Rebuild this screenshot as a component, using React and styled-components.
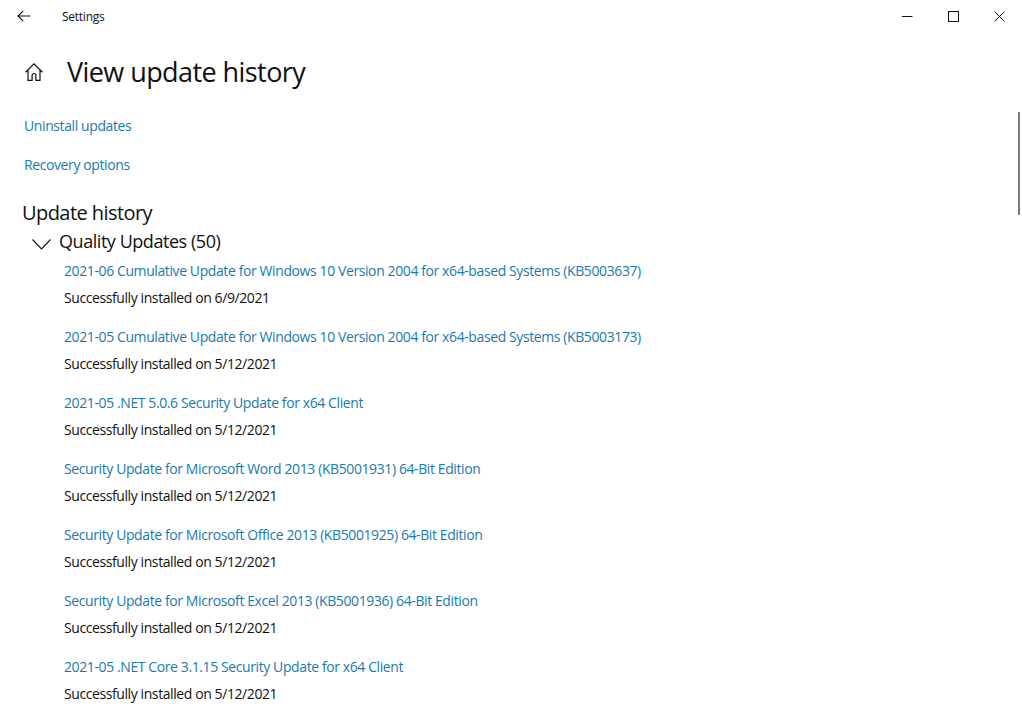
import React from "react";
import styled, { createGlobalStyle } from "styled-components";

const Global = createGlobalStyle`
  html, body { margin: 0; padding: 0; background: #fff; overflow: hidden; }
  body { font-family: "Open Sans", "Noto Sans", sans-serif; color: #000; }
`;
const Page = styled.div`
  width: 1022px; height: 726px; position: relative; overflow: hidden; background: #fff;
`;
const TitleBar = styled.header`
  height: 32px; display: flex; align-items: center;
`;
const BackButton = styled.button`
  width: 48px; height: 32px; padding: 0; border: 0; background: none;
  display: flex; align-items: center; justify-content: center;
`;
const AppName = styled.span`
  margin-left: 14px; font-size: 12px; color: #111; letter-spacing: -0.25px; flex: 1;
`;
const WindowControls = styled.div`
  display: flex; width: 138px; height: 32px;
`;
const WindowButton = styled.button`
  width: 46px; height: 32px; padding: 0; border: 0; background: none;
  display: flex; align-items: center; justify-content: center;
`;
const Content = styled.main`
  padding: 0 0 0 24px;
`;
const Heading = styled.div`
  display: flex; align-items: center; height: 48px; margin-top: 16px;
`;
const HomeIcon = styled.svg`
  width: 18px; height: 18px; margin: 0 24px 0 1px; flex: none;
`;
const Title = styled.h1`
  margin: 0; font-size: 27px; font-weight: 400; color: #111; letter-spacing: -0.57px; line-height: 48px;
`;
const NavLinks = styled.nav`
  display: flex; flex-direction: column; gap: 19px; margin-top: 20px;
`;
const NavLink = styled.a`
  font-size: 14px; line-height: 20px; color: #1a7aad; letter-spacing: -0.4px;
`;
const SectionTitle = styled.h2`
  margin: 24px 0 0 -2px; font-size: 20px; font-weight: 400; line-height: 28px; color: #111; letter-spacing: -0.56px;
`;
const GroupHeader = styled.div`
  display: flex; align-items: center; height: 30px; margin: -1px 0 0 8px;
`;
const Chevron = styled.svg`
  width: 19px; height: 11px; margin-top: 6px; margin-right: 8px; flex: none;
`;
const GroupTitle = styled.span`
  font-size: 18px; color: #111; letter-spacing: -0.45px;
`;
const UpdateList = styled.ul`
  list-style: none; margin: 5px 0 0 40px; padding: 0;
`;
const UpdateRow = styled.li`
  height: 66px; display: flex; flex-direction: column; gap: 7px;
`;
const UpdateLink = styled.a`
  font-size: 14px; line-height: 20px; color: #1a7aad; letter-spacing: -0.4px; white-space: nowrap;
`;
const UpdateStatus = styled.span`
  font-size: 14px; line-height: 20px; color: #111; letter-spacing: -0.41px; white-space: nowrap;
`;
const ScrollThumb = styled.div`
  position: absolute; top: 112px; right: 2px; width: 2px; height: 103px; background: #7a7a7a;
`;

const updates = [
  ["2021-06 Cumulative Update for Windows 10 Version 2004 for x64-based Systems (KB5003637)", "6/9/2021"],
  ["2021-05 Cumulative Update for Windows 10 Version 2004 for x64-based Systems (KB5003173)", "5/12/2021"],
  ["2021-05 .NET 5.0.6 Security Update for x64 Client", "5/12/2021"],
  ["Security Update for Microsoft Word 2013 (KB5001931) 64-Bit Edition", "5/12/2021"],
  ["Security Update for Microsoft Office 2013 (KB5001925) 64-Bit Edition", "5/12/2021"],
  ["Security Update for Microsoft Excel 2013 (KB5001936) 64-Bit Edition", "5/12/2021"],
  ["2021-05 .NET Core 3.1.15 Security Update for x64 Client", "5/12/2021"],
];

export default function App() {
  return (
    <Page>
      <Global />
      <TitleBar>
        <BackButton aria-label="Back">
          <svg width="14" height="12" viewBox="0 0 14 12" fill="none" stroke="#111" strokeWidth="1.1">
            <path d="M13.5 6H1M6.2 .8 1 6l5.2 5.2" />
          </svg>
        </BackButton>
        <AppName>Settings</AppName>
        <WindowControls>
          <WindowButton aria-label="Minimize">
            <svg width="11" height="11" viewBox="0 0 11 11" stroke="#111" strokeWidth="1"><path d="M0 5.5h10.5" /></svg>
          </WindowButton>
          <WindowButton aria-label="Maximize">
            <svg width="11" height="11" viewBox="0 0 11 11" fill="none" stroke="#111" strokeWidth="1"><rect x=".5" y=".5" width="10" height="10" /></svg>
          </WindowButton>
          <WindowButton aria-label="Close">
            <svg width="11" height="11" viewBox="0 0 11 11" fill="none" stroke="#111" strokeWidth="1"><path d="M.5.5l10 10M10.5.5l-10 10" /></svg>
          </WindowButton>
        </WindowControls>
      </TitleBar>
      <Content>
        <Heading>
          <HomeIcon viewBox="0 0 18 18" fill="none" stroke="#111" strokeWidth="1.2">
            <path d="M.6 9.2 9 .9l8.4 8.3M3 7.2v10.2h4.1v-5a1.9 1.9 0 0 1 3.8 0v5H15V7.2" />
          </HomeIcon>
          <Title>View update history</Title>
        </Heading>
        <NavLinks>
          <NavLink>Uninstall updates</NavLink>
          <NavLink>Recovery options</NavLink>
        </NavLinks>
        <SectionTitle>Update history</SectionTitle>
        <GroupHeader>
          <Chevron viewBox="0 0 19 11" fill="none" stroke="#111" strokeWidth="1.1"><path d="M.5.5l9 9.5 9-9.5" /></Chevron>
          <GroupTitle>Quality Updates (50)</GroupTitle>
        </GroupHeader>
        <UpdateList>
          {updates.map(([name, date]) => (
            <UpdateRow key={name}>
              <UpdateLink>{name}</UpdateLink>
              <UpdateStatus>Successfully installed on {date}</UpdateStatus>
            </UpdateRow>
          ))}
        </UpdateList>
      </Content>
      <ScrollThumb />
    </Page>
  );
}
